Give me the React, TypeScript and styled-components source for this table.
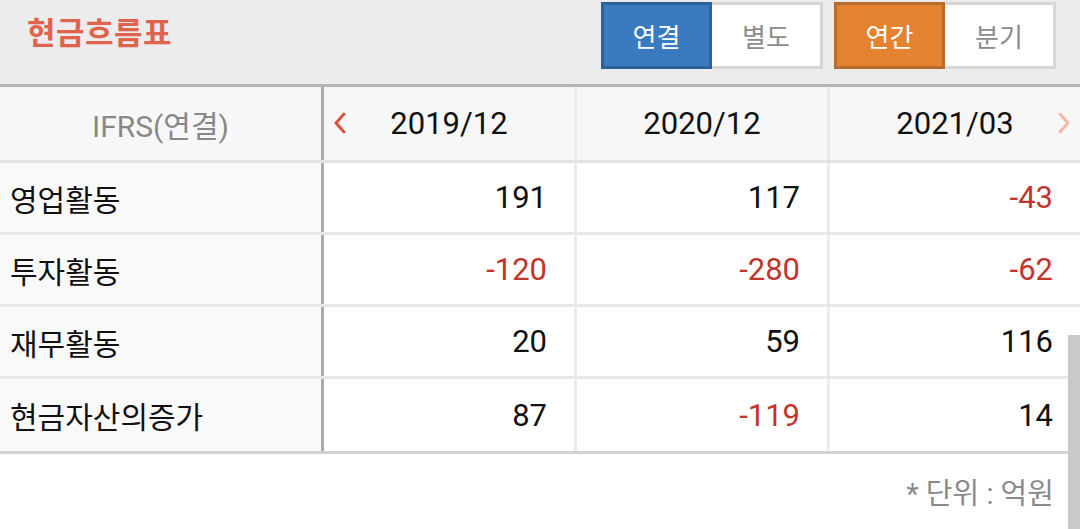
import styled, { createGlobalStyle } from "styled-components";

const GlobalStyle = createGlobalStyle`
  html, body {
    margin: 0;
    padding: 0;
    background: #ffffff;
  }
  body {
    font-family: Roboto, "Noto Sans CJK KR", "Noto Sans", sans-serif;
    color: #111111;
  }
  * {
    box-sizing: border-box;
  }
`;

interface IRow {
  label: string;
  values: number[];
}

const periods = ["2019/12", "2020/12", "2021/03"];

const rows: IRow[] = [
  { label: "영업활동", values: [191, 117, -43] },
  { label: "투자활동", values: [-120, -280, -62] },
  { label: "재무활동", values: [20, 59, 116] },
  { label: "현금자산의증가", values: [87, -119, 14] },
];

function Chevron({ dir, faded }: { dir: "left" | "right"; faded?: boolean }) {
  const d = dir === "left" ? "M11 2 L3 11 L11 20" : "M3 2 L11 11 L3 20";
  return (
    <svg width="14" height="22" viewBox="0 0 14 22">
      <path
        d={d}
        fill="none"
        stroke={faded ? "#f2b8a8" : "#d9543e"}
        strokeWidth="3"
        strokeLinecap="round"
        strokeLinejoin="round"
      />
    </svg>
  );
}

function App() {
  return (
    <Page>
      <GlobalStyle />
      <TopBar>
        <Title>현금흐름표</Title>
        <Toggles>
          <ToggleGroup>
            <Toggle $active="blue">연결</Toggle>
            <Toggle>별도</Toggle>
          </ToggleGroup>
          <ToggleGroup>
            <Toggle $active="orange">연간</Toggle>
            <Toggle>분기</Toggle>
          </ToggleGroup>
        </Toggles>
      </TopBar>

      <Table>
        <HeadRow>
          <HeadLabel>IFRS(연결)</HeadLabel>
          {periods.map((p, i) => (
            <HeadCell key={p} $first={i === 0}>
              {i === 0 && (
                <NavLeft>
                  <Chevron dir="left" />
                </NavLeft>
              )}
              {p}
              {i === periods.length - 1 && (
                <NavRight>
                  <Chevron dir="right" faded />
                </NavRight>
              )}
            </HeadCell>
          ))}
        </HeadRow>
        {rows.map((r, ri) => (
          <Row key={r.label} $last={ri === rows.length - 1}>
            <Label>{r.label}</Label>
            {r.values.map((v, i) => (
              <Value key={i} $first={i === 0} $negative={v < 0}>
                {v}
              </Value>
            ))}
          </Row>
        ))}
      </Table>

      <Unit>* 단위 : 억원</Unit>
      <ScrollThumb />
    </Page>
  );
}

export default App;

const Page = styled.div`
  position: relative;
  width: 1080px;
  height: 529px;
  overflow: hidden;
  background: #ffffff;
`;

const TopBar = styled.div`
  display: flex;
  justify-content: space-between;
  align-items: flex-start;
  height: 87px;
  padding: 2px 24px 0 27px;
  background: #ececec;
  border-bottom: 3px solid #b5b5b5;
`;

const Title = styled.h1`
  margin: 0;
  padding-top: 11px;
  font-size: 31px;
  line-height: 42px;
  font-weight: 700;
  color: #e0644d;
  letter-spacing: 0.5px;
`;

const Toggles = styled.div`
  display: flex;
  gap: 11px;
`;

const ToggleGroup = styled.div`
  display: flex;
`;

const Toggle = styled.div<{ $active?: "blue" | "orange" }>`
  width: 111px;
  height: 67px;
  display: flex;
  align-items: center;
  justify-content: center;
  font-size: 26px;
  color: ${(p) => (p.$active ? "#ffffff" : "#8c8c8c")};
  background: ${(p) =>
    p.$active === "blue" ? "#3a7bbf" : p.$active === "orange" ? "#e4832f" : "#ffffff"};
  border: 3px solid
    ${(p) =>
      p.$active === "blue" ? "#2c619c" : p.$active === "orange" ? "#b96b2a" : "#d6d6d6"};
  border-left-width: ${(p) => (p.$active ? "3px" : "0")};
`;

const Table = styled.div`
  display: flex;
  flex-direction: column;
`;

const HeadRow = styled.div`
  display: grid;
  grid-template-columns: 321px repeat(3, 1fr);
  height: 76px;
  background: #f7f7f7;
  border-bottom: 3px solid #e3e3e3;
`;

const HeadLabel = styled.div`
  display: flex;
  align-items: center;
  justify-content: center;
  font-size: 30px;
  color: #888888;
`;

const HeadCell = styled.div<{ $first?: boolean }>`
  position: relative;
  display: flex;
  align-items: center;
  justify-content: center;
  font-size: 31px;
  color: #111111;
  border-left: 3px solid ${(p) => (p.$first ? "#ababab" : "#ebebeb")};
`;

const NavLeft = styled.span`
  position: absolute;
  left: 9px;
  top: 25px;
  display: flex;
`;

const NavRight = styled.span`
  position: absolute;
  right: 9px;
  top: 25px;
  display: flex;
`;

const Row = styled.div<{ $last?: boolean }>`
  display: grid;
  grid-template-columns: 321px repeat(3, 1fr);
  height: ${(p) => (p.$last ? "75px" : "72px")};
  border-bottom: 3px solid ${(p) => (p.$last ? "#d2d2d2" : "#e8e8e8")};
`;

const Label = styled.div`
  display: flex;
  align-items: center;
  padding-left: 10px;
  font-size: 30px;
  color: #111111;
  background: #f9f9f9;
`;

const Value = styled.div<{ $first?: boolean; $negative?: boolean }>`
  display: flex;
  align-items: center;
  justify-content: flex-end;
  padding-right: 27px;
  font-size: 31px;
  color: ${(p) => (p.$negative ? "#c0352c" : "#111111")};
  background: #ffffff;
  border-left: 3px solid ${(p) => (p.$first ? "#ababab" : "#ebebeb")};
`;

const Unit = styled.div`
  padding: 16px 26px 0 0;
  text-align: right;
  font-size: 29px;
  color: #8a8a8a;
`;

const ScrollThumb = styled.div`
  position: absolute;
  right: 0;
  top: 335px;
  width: 12px;
  bottom: 0;
  background: #c9c9c9;
`;
